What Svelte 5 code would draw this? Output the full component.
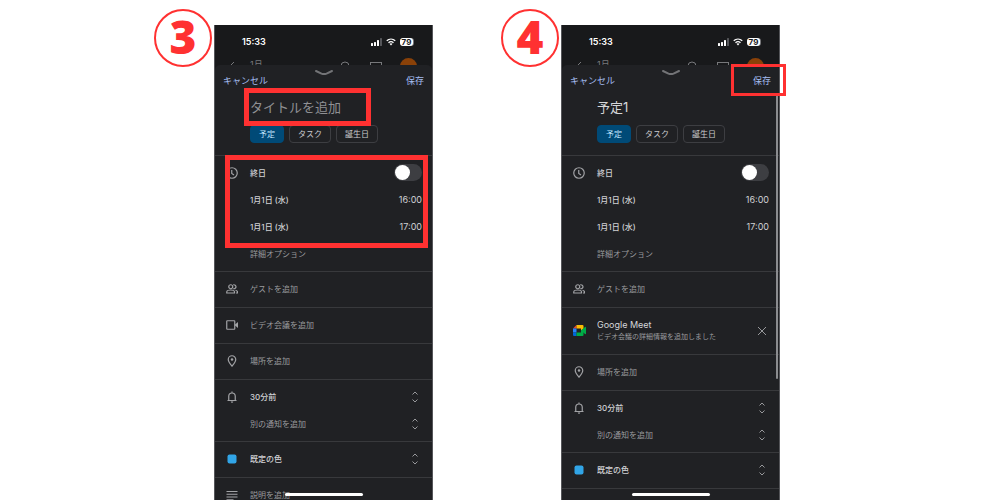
<script>
  const screens = [
    { step: '3', title: '', meet: false, scrollbar: false, marks: ['title', 'dates'] },
    { step: '4', title: '予定1', meet: true, scrollbar: true, marks: ['save'] }
  ];
  const dates = [
    { day: '1月1日 (水)', time: '16:00' },
    { day: '1月1日 (水)', time: '17:00' }
  ];
</script>

{#snippet icon(name)}
  <svg class="icon" viewBox="0 0 24 24" aria-hidden="true">
    {#if name === 'clock'}
      <circle cx="12" cy="12" r="10.500" />
      <path d="M11.500 6V13l4.500 3" />
    {:else if name === 'people'}
      <circle cx="9.500" cy="7.500" r="4" />
      <path d="M1.500 20v-2c0-2.500 4-4 8-4s7.500 1.500 7.500 4v2zM14.500 3.700c3-.9 5.500 1.300 5.500 3.800s-2.500 4.700-5.500 3.800M19 14.500c2.500.6 4 1.800 4 3.500v2h-3" />
    {:else if name === 'video'}
      <rect x="1.500" y="3.500" width="16" height="17" rx="1" />
      <path class="solid" d="M18 11l6-5v12l-6-5z" />
    {:else if name === 'pin'}
      <path d="M12 22.500C8 17.500 4.500 13.500 4.500 9a7.500 7.500 0 0 1 15 0c0 4.500-3.500 8.500-7.500 13.500z" />
      <circle class="solid" cx="12" cy="9" r="2.500" />
    {:else if name === 'bell'}
      <path d="M3 19h18M5.500 19v-8.500a6.500 6.500 0 0 1 13 0V19M12 4.500V1" />
      <path class="solid" d="M9.500 21h5a2.500 2.500 0 0 1-5 0z" />
    {:else if name === 'notes'}
      <path d="M1 5h22M1 10.500h22M1 16h22M1 21.500h14" />
    {:else if name === 'color'}
      <rect class="swatch" x="3" y="3" width="18" height="18" rx="4" />
    {/if}
  </svg>
{/snippet}

{#snippet updown()}
  <svg class="updown" viewBox="0 0 14 14" aria-hidden="true">
    <path d="M4.500 4.500L7 2l2.500 2.500M4.500 9.500L7 12l2.500-2.500" />
  </svg>
{/snippet}

<main>
  {#each screens as screen}
    <section class="step">
      <div class="badge">{screen.step}</div>
      <div class="frame">
        <div class="phone">
          <div class="status">
            <span class="clock">15:33</span>
            <svg class="signal" viewBox="0 0 12 8" aria-hidden="true">
              <rect x="0" y="5" width="2" height="3" rx=".5" />
              <rect x="3" y="4" width="2" height="4" rx=".5" />
              <rect x="6" y="2" width="2" height="6" rx=".5" />
              <rect class="off" x="9" y="0" width="2" height="8" rx=".5" />
            </svg>
            <svg class="wifi" viewBox="0 0 20 16" aria-hidden="true">
              <path d="M1.500 5.500c5-4.600 12-4.600 17 0M5 9.300c3-2.600 7-2.600 10 0" />
              <path class="dot" d="M7 11.700c1.800-1.500 4.200-1.500 6 0L10 15z" />
            </svg>
            <span class="battery">79</span>
          </div>

          <div class="behind" aria-hidden="true">
            <svg class="back" viewBox="0 0 10 10"><path d="M7 1L2 6l5 4" /></svg>
            <span class="month">1月</span>
            <svg class="search" viewBox="0 0 12 12"><circle cx="6" cy="6" r="4" /></svg>
            <svg class="today" viewBox="0 0 14 12"><rect x="1.500" y="1.500" width="11" height="12" /></svg>
            <span class="avatar"></span>
          </div>

          <form class="sheet" onsubmit={(e) => e.preventDefault()}>
            <header>
              <button type="button">キャンセル</button>
              <svg class="grabber" viewBox="0 0 20 8" aria-hidden="true"><path d="M2 2l5.500 2.600q2.500 1 5 0L18 2" /></svg>
              <button type="submit">保存</button>
            </header>
            <input class="title" type="text" value={screen.title} placeholder="タイトルを追加" aria-label="タイトルを追加" />
            <div class="chips">
              <button type="button" class="chip on">予定</button>
              <button type="button" class="chip">タスク</button>
              <button type="button" class="chip">誕生日</button>
            </div>

            <div class="group">
              <label class="row strong">
                {@render icon('clock')}
                <span class="text">終日</span>
                <input class="switch" type="checkbox" role="switch" />
              </label>
              {#each dates as d}
                <div class="row strong indent">
                  <button type="button" class="text">{d.day}</button>
                  <button type="button" class="time">{d.time}</button>
                </div>
              {/each}
              <div class="row indent"><button type="button" class="text">詳細オプション</button></div>
            </div>

            <div class="group">
              <div class="row">{@render icon('people')}<button type="button" class="text">ゲストを追加</button></div>
            </div>

            {#if screen.meet}
              <div class="group meet">
                <div class="row">
                  <svg class="icon logo" viewBox="0 0 26 22" aria-hidden="true">
                    <path fill="#ea4335" d="M7 0v7H0z" />
                    <path fill="#fbbc04" d="M7 0h12a2 2 0 0 1 2 2v6l-5 4V7H7z" />
                    <path fill="#2684fc" d="M0 7h7v8H0z" />
                    <path fill="#0066da" d="M0 15h7v7H2a2 2 0 0 1-2-2z" />
                    <path fill="#00ac47" d="M7 15h9v-4l5-4v13a2 2 0 0 1-2 2H7z" />
                    <path fill="#00ac47" d="M16 11l8-7q2-1 2 1v12q0 2-2 1z" />
                  </svg>
                  <div class="text">
                    <div class="name">Google Meet</div>
                    <div class="note">ビデオ会議の詳細情報を追加しました</div>
                  </div>
                  <button type="button" class="remove" aria-label="削除">
                    <svg class="updown" viewBox="0 0 14 14" aria-hidden="true"><path d="M3 3l8 8M11 3l-8 8" /></svg>
                  </button>
                </div>
              </div>
            {:else}
              <div class="group">
                <div class="row">{@render icon('video')}<button type="button" class="text">ビデオ会議を追加</button></div>
              </div>
            {/if}

            <div class="group">
              <div class="row">{@render icon('pin')}<button type="button" class="text">場所を追加</button></div>
            </div>

            <div class="group">
              <label class="row strong">
                {@render icon('bell')}
                <select class="text" aria-label="通知"><option>30分前</option></select>
                {@render updown()}
              </label>
              <label class="row indent">
                <select class="text" aria-label="別の通知"><option>別の通知を追加</option></select>
                {@render updown()}
              </label>
            </div>

            <div class="group">
              <label class="row strong">
                {@render icon('color')}
                <select class="text" aria-label="色"><option>既定の色</option></select>
                {@render updown()}
              </label>
            </div>

            <div class="group">
              {#if !screen.meet}
                <div class="row">{@render icon('notes')}<button type="button" class="text">説明を追加</button></div>
              {/if}
            </div>
          </form>
          <div class="home"></div>
          {#if screen.scrollbar}<div class="scrollbar"></div>{/if}
        </div>
        {#each screen.marks as mark}
          <div class="mark {mark}"></div>
        {/each}
      </div>
    </section>
  {/each}
</main>

<style>
  :global(body) {
    margin: 0;
    background: #fff;
  }
  main {
    display: flex;
    justify-content: center;
    gap: 68px;
    height: 100vh;
    padding-right: 66px;
    box-sizing: border-box;
    overflow: hidden;
    font-family: Inter, 'Noto Sans CJK JP', sans-serif;
    font-size: 8px;
    line-height: 12px;
    color: #9a9b9e;
  }
  .step {
    display: flex;
    gap: 2px;
  }
  .badge {
    box-sizing: border-box;
    width: 58px;
    height: 58px;
    margin-top: 9px;
    border: 2px solid #ff3131;
    border-radius: 50%;
    color: #ff3131;
    font: 800 46px/50px 'Open Sans', sans-serif;
    text-align: center;
  }
  .frame {
    position: relative;
    width: 219px;
    padding-top: 25px;
    box-sizing: border-box;
  }
  .phone {
    position: relative;
    display: flex;
    flex-direction: column;
    height: 100%;
    overflow: hidden;
    background: #18191b;
    box-shadow: inset 1px 0 #55565a, inset -1px 0 #55565a;
  }
  .status {
    display: flex;
    align-items: center;
    flex: none;
    box-sizing: border-box;
    height: 32px;
    padding: 2px 17px 0 28px;
    color: #fff;
  }
  .clock {
    flex: 1;
    font-size: 9px;
    font-weight: 600;
  }
  .signal {
    width: 12px;
    height: 8px;
    margin-right: 3px;
    fill: #fff;
  }
  .signal .off {
    fill: #55565a;
  }
  .wifi {
    width: 10px;
    height: 8px;
    margin-right: 4px;
    fill: none;
    stroke: #fff;
    stroke-width: 2.6;
  }
  .wifi .dot {
    fill: #fff;
    stroke: none;
  }
  .battery {
    width: 13px;
    height: 8px;
    margin-right: 3px;
    border-radius: 3px;
    background: #fff;
    box-shadow: 1px 0 #77787b;
    color: #18191b;
    font-size: 8px;
    font-weight: 700;
    line-height: 8px;
    text-align: center;
  }
  .behind {
    display: flex;
    flex: none;
    height: 8px;
    padding: 0 16px 0 13px;
    overflow: hidden;
    color: #77787b;
  }
  .behind svg {
    flex: none;
    margin-top: 4px;
    fill: none;
    stroke: #77787b;
  }
  .back {
    width: 10px;
    height: 10px;
  }
  .month {
    flex: 1;
    margin: 2px 0 0 13px;
    font-size: 9px;
  }
  .behind .search {
    width: 12px;
    height: 12px;
    margin: 3px 18px 0 0;
  }
  .today {
    width: 14px;
    height: 12px;
    margin-right: 17px;
  }
  .avatar {
    flex: none;
    width: 17px;
    height: 17px;
    margin-top: 1px;
    border-radius: 50%;
    background: #8a4108;
  }
  .sheet {
    flex: 1;
    margin: 0 1px;
    border-radius: 5px 5px 0 0;
    background: #202124;
  }
  button,
  input,
  select {
    margin: 0;
    padding: 0;
    border: 0;
    background: none;
    color: inherit;
    font: inherit;
    text-align: left;
    appearance: none;
  }
  header {
    display: flex;
    justify-content: space-between;
    height: 30px;
    padding: 0 8px;
    color: #a4bdf0;
    font-size: 9px;
  }
  header button {
    padding-top: 1px;
  }
  header button:last-child {
    width: 45px;
    text-align: right;
  }
  .grabber {
    width: 20px;
    height: 8px;
    margin-top: 4px;
    fill: none;
    stroke: #737477;
    stroke-width: 2;
    stroke-linecap: round;
  }
  .title {
    display: block;
    width: calc(100% - 70px);
    height: 24px;
    margin-left: 35px;
    color: #d6d7da;
    font-size: 13px;
    line-height: 24px;
  }
  .title::placeholder {
    color: #8f9093;
    opacity: 1;
  }
  .chips {
    display: flex;
    gap: 5px;
    padding: 6px 0 12px 35px;
  }
  .chip {
    box-sizing: border-box;
    height: 18px;
    padding: 0 8px;
    border: 1px solid #3d3e42;
    border-radius: 4px;
    color: #c9cacd;
    text-align: center;
  }
  .chip.on {
    border-color: #004a77;
    background: #004a77;
    color: #c2e7ff;
  }
  .group {
    box-sizing: border-box;
    min-height: 36px;
    padding: 3px 10px 4px 11px;
    border-top: 1px solid #38393c;
  }
  .row {
    display: flex;
    align-items: center;
    gap: 12px;
    height: 27px;
  }
  .indent {
    padding-left: 24px;
  }
  .strong {
    color: #d0d1d4;
    font-weight: 500;
  }
  .text {
    flex: 1;
    min-width: 0;
  }
  .time {
    font-size: 9px;
    font-weight: 400;
  }
  .icon {
    flex: none;
    width: 12px;
    height: 12px;
    fill: none;
    stroke: #a2a3a6;
    stroke-width: 2.4;
  }
  .icon .solid {
    fill: #a2a3a6;
    stroke: none;
  }
  .icon .swatch {
    fill: #31a5e7;
    stroke: none;
  }
  .icon.logo {
    width: 13px;
    height: 11px;
    margin-right: -1px;
    stroke: none;
  }
  .updown {
    display: block;
    flex: none;
    width: 14px;
    height: 14px;
    fill: none;
    stroke: #97989b;
    pointer-events: none;
  }
  .switch {
    box-sizing: border-box;
    width: 28px;
    height: 17px;
    border-radius: 9px;
    background: #3d3e42;
  }
  .switch::before {
    content: '';
    display: block;
    width: 15px;
    height: 15px;
    margin: 1px;
    border-radius: 50%;
    background: #fff;
  }
  .switch:checked::before {
    margin-left: 12px;
  }
  .meet .row {
    height: 39px;
  }
  .name {
    color: #d6d7da;
    font-size: 9px;
  }
  .note {
    font-size: 7px;
  }
  .home {
    position: absolute;
    bottom: 4px;
    left: 50%;
    width: 78px;
    height: 3px;
    border-radius: 2px;
    background: #fff;
    transform: translateX(-50%);
  }
  .scrollbar {
    position: absolute;
    top: 70px;
    right: 2px;
    width: 2px;
    height: 284px;
    border-radius: 1px;
    background: #8b8c8f;
  }
  .mark {
    position: absolute;
    box-sizing: border-box;
    border: 5px solid #ff3131;
    pointer-events: none;
  }
  .mark.title {
    top: 88px;
    left: 30px;
    width: 127px;
    height: 38px;
    margin: 0;
  }
  .mark.dates {
    top: 155px;
    left: 11px;
    width: 203px;
    height: 93px;
  }
  .mark.save {
    top: 64px;
    right: -6px;
    width: 55px;
    height: 32px;
    border-width: 3px;
  }
</style>
